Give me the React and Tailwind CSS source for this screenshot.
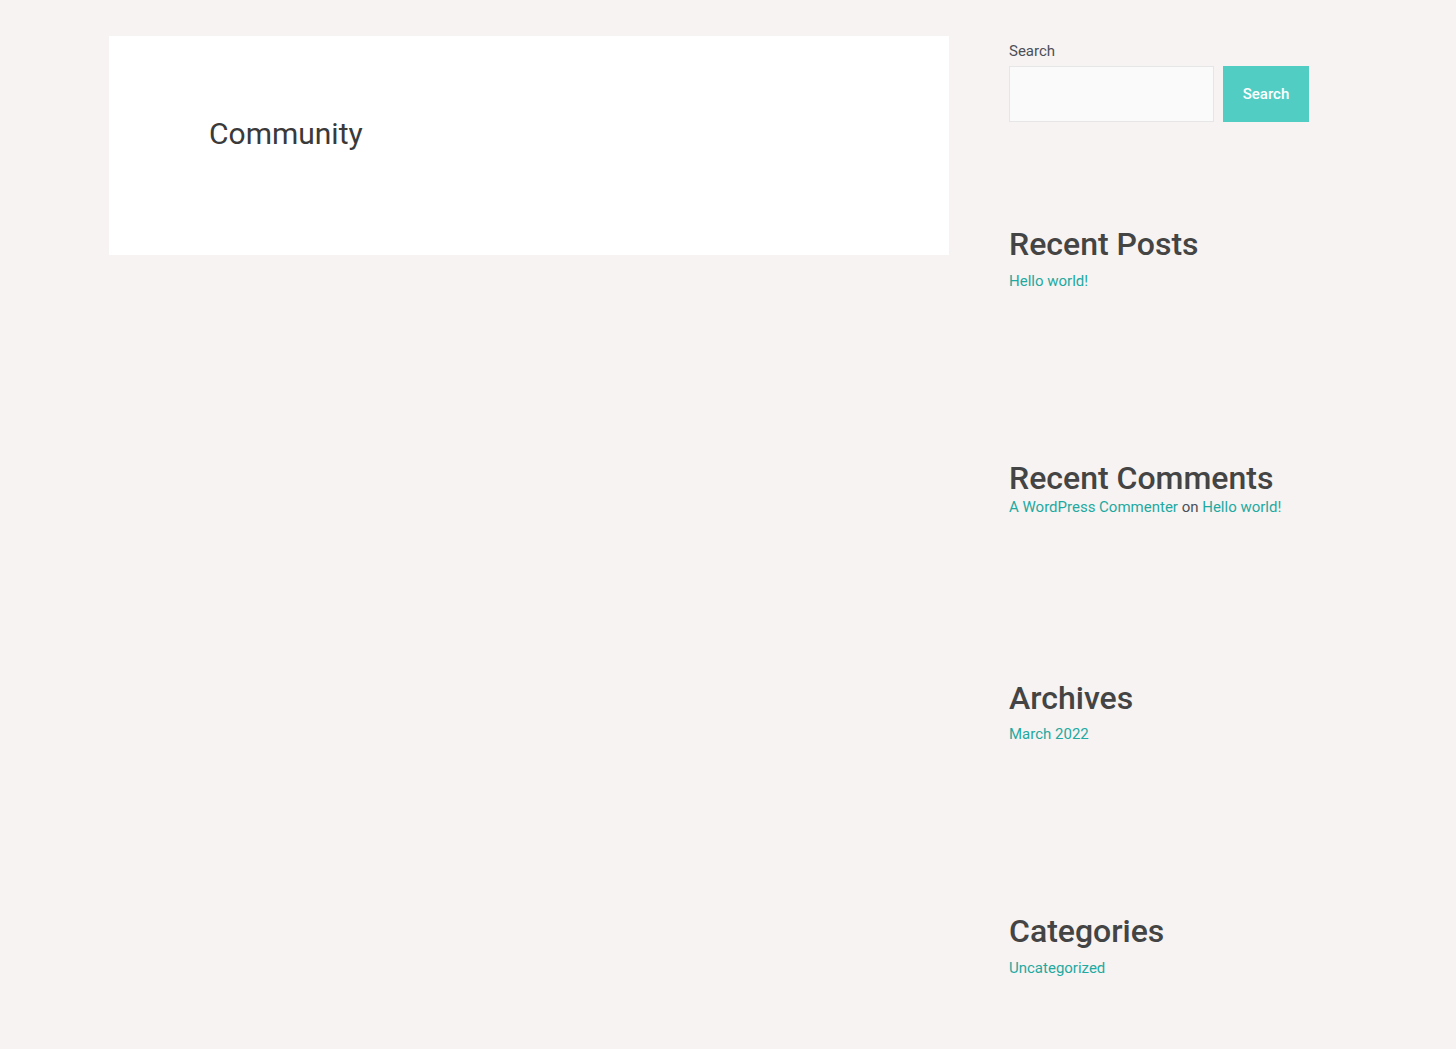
import React from "react";

const Widget = ({ title, children, className = "" }) => (
  <section className={className}>
    <h2 className="text-[32px] leading-[38px] font-medium text-[#444444]">{title}</h2>
    {children}
  </section>
);

const App = () => {
  return (
    <div className="min-h-[1049px] bg-[#f6f3f2] font-['Roboto',sans-serif] text-[15px] text-[#4b4f58]">
      <div className="flex pl-[109px] pt-[36px]">
        <main className="w-[840px] shrink-0">
          <article className="bg-white h-[219px] pl-[100px] pt-[80px]">
            <h1 className="text-[30px] leading-[36px] font-normal text-[#3a3a3a]">Community</h1>
          </article>
        </main>

        <aside className="w-[300px] ml-[60px]">
          <form className="pt-[3px]" onSubmit={(e) => e.preventDefault()}>
            <label className="block text-[15px] leading-[24px] text-[#4b4f58] mb-[3px]">Search</label>
            <div className="flex gap-[9px]">
              <input
                type="text"
                className="w-[205px] h-[56px] bg-[#fafafa] border border-[#e6e6e6] outline-none"
              />
              <button
                type="submit"
                className="w-[86px] h-[56px] bg-[#52cdc4] text-white text-[15px] font-medium"
              >
                Search
              </button>
            </div>
          </form>

          <Widget title="Recent Posts" className="mt-[103px]">
            <a href="#" className="block mt-[6px] leading-[24px] text-[#1fa9a0]">Hello world!</a>
          </Widget>

          <Widget title="Recent Comments" className="mt-[166px]">
            <p className="-mt-[2px] leading-[24px]">
              <a href="#" className="text-[#1fa9a0]">A WordPress Commenter</a> on{" "}
              <a href="#" className="text-[#1fa9a0]">Hello world!</a>
            </p>
          </Widget>

          <Widget title="Archives" className="mt-[160px]">
            <a href="#" className="block mt-[5px] leading-[24px] text-[#1fa9a0]">March 2022</a>
          </Widget>

          <Widget title="Categories" className="mt-[166px]">
            <a href="#" className="block mt-[6px] leading-[24px] text-[#1fa9a0]">Uncategorized</a>
          </Widget>
        </aside>
      </div>
    </div>
  );
};

export default App;
